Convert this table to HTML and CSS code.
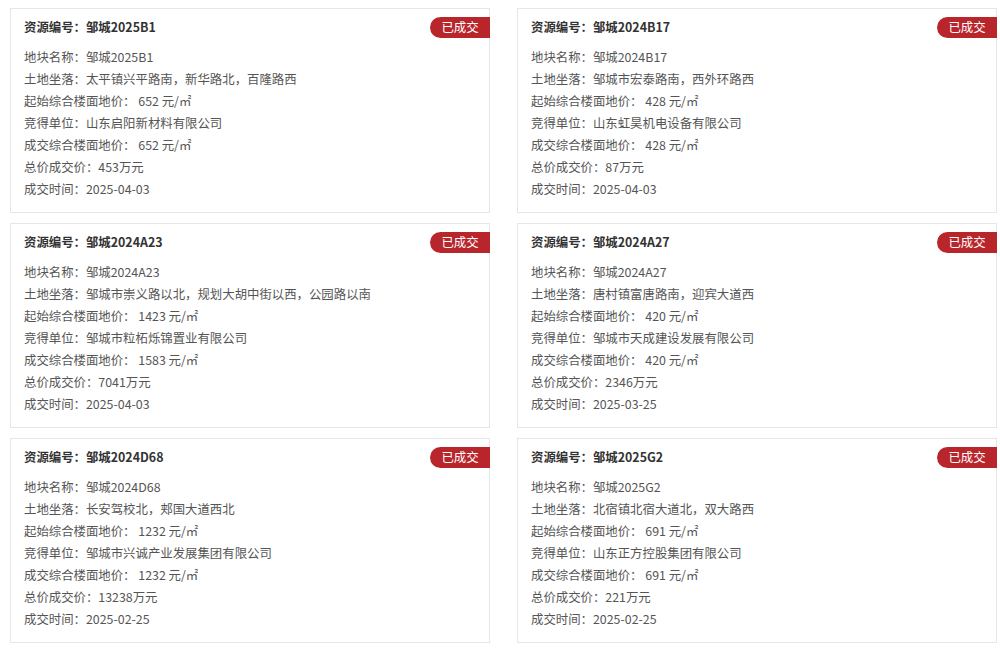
FILE: index.html
```html
<!DOCTYPE html>
<html lang="zh-CN">
<head>
<meta charset="utf-8">
<link rel="stylesheet" href="styles.css">
</head>
<body>
<div class="grid">
  <div class="card">
    <span class="badge">已成交</span>
    <div class="title">资源编号：邹城2025B1</div>
    <div class="line">地块名称：邹城2025B1</div>
    <div class="line">土地坐落：太平镇兴平路南，新华路北，百隆路西</div>
    <div class="line">起始综合楼面地价： 652 元/㎡</div>
    <div class="line">竞得单位：山东启阳新材料有限公司</div>
    <div class="line">成交综合楼面地价： 652 元/㎡</div>
    <div class="line">总价成交价：453万元</div>
    <div class="line">成交时间：2025-04-03</div>
  </div>
  <div class="card">
    <span class="badge">已成交</span>
    <div class="title">资源编号：邹城2024B17</div>
    <div class="line">地块名称：邹城2024B17</div>
    <div class="line">土地坐落：邹城市宏泰路南，西外环路西</div>
    <div class="line">起始综合楼面地价： 428 元/㎡</div>
    <div class="line">竞得单位：山东虹昊机电设备有限公司</div>
    <div class="line">成交综合楼面地价： 428 元/㎡</div>
    <div class="line">总价成交价：87万元</div>
    <div class="line">成交时间：2025-04-03</div>
  </div>
  <div class="card">
    <span class="badge">已成交</span>
    <div class="title">资源编号：邹城2024A23</div>
    <div class="line">地块名称：邹城2024A23</div>
    <div class="line">土地坐落：邹城市崇义路以北，规划大胡中街以西，公园路以南</div>
    <div class="line">起始综合楼面地价： 1423 元/㎡</div>
    <div class="line">竞得单位：邹城市粒柘烁锦置业有限公司</div>
    <div class="line">成交综合楼面地价： 1583 元/㎡</div>
    <div class="line">总价成交价：7041万元</div>
    <div class="line">成交时间：2025-04-03</div>
  </div>
  <div class="card">
    <span class="badge">已成交</span>
    <div class="title">资源编号：邹城2024A27</div>
    <div class="line">地块名称：邹城2024A27</div>
    <div class="line">土地坐落：唐村镇富唐路南，迎宾大道西</div>
    <div class="line">起始综合楼面地价： 420 元/㎡</div>
    <div class="line">竞得单位：邹城市天成建设发展有限公司</div>
    <div class="line">成交综合楼面地价： 420 元/㎡</div>
    <div class="line">总价成交价：2346万元</div>
    <div class="line">成交时间：2025-03-25</div>
  </div>
  <div class="card">
    <span class="badge">已成交</span>
    <div class="title">资源编号：邹城2024D68</div>
    <div class="line">地块名称：邹城2024D68</div>
    <div class="line">土地坐落：长安驾校北，郏国大道西北</div>
    <div class="line">起始综合楼面地价： 1232 元/㎡</div>
    <div class="line">竞得单位：邹城市兴诚产业发展集团有限公司</div>
    <div class="line">成交综合楼面地价： 1232 元/㎡</div>
    <div class="line">总价成交价：13238万元</div>
    <div class="line">成交时间：2025-02-25</div>
  </div>
  <div class="card">
    <span class="badge">已成交</span>
    <div class="title">资源编号：邹城2025G2</div>
    <div class="line">地块名称：邹城2025G2</div>
    <div class="line">土地坐落：北宿镇北宿大道北，双大路西</div>
    <div class="line">起始综合楼面地价： 691 元/㎡</div>
    <div class="line">竞得单位：山东正方控股集团有限公司</div>
    <div class="line">成交综合楼面地价： 691 元/㎡</div>
    <div class="line">总价成交价：221万元</div>
    <div class="line">成交时间：2025-02-25</div>
  </div>
</div>
</body>
</html>
```

FILE: styles.css
```css
html, body {
  margin: 0;
  padding: 0;
  background: #ffffff;
}
body {
  font-family: "Noto Sans CJK SC", "Noto Sans", sans-serif;
  font-size: 12.4px;
  color: #555555;
}
.grid {
  display: grid;
  grid-template-columns: 480px 480px;
  column-gap: 27px;
  row-gap: 10px;
  padding: 8px 0 0 10px;
}
.card {
  position: relative;
  box-sizing: border-box;
  height: 205px;
  border: 1px solid #e6e6e6;
  padding: 7px 14px 0 13px;
}
.title {
  font-weight: bold;
  color: #333333;
  line-height: 22px;
  margin-bottom: 8px;
}
.line {
  line-height: 22px;
  white-space: nowrap;
}
.badge {
  position: absolute;
  top: 8px;
  right: -1px;
  width: 60px;
  height: 21px;
  line-height: 21px;
  background: #b8262c;
  color: #ffffff;
  font-size: 12.4px;
  text-align: center;
  border-radius: 11px 0 0 11px;
}
```
